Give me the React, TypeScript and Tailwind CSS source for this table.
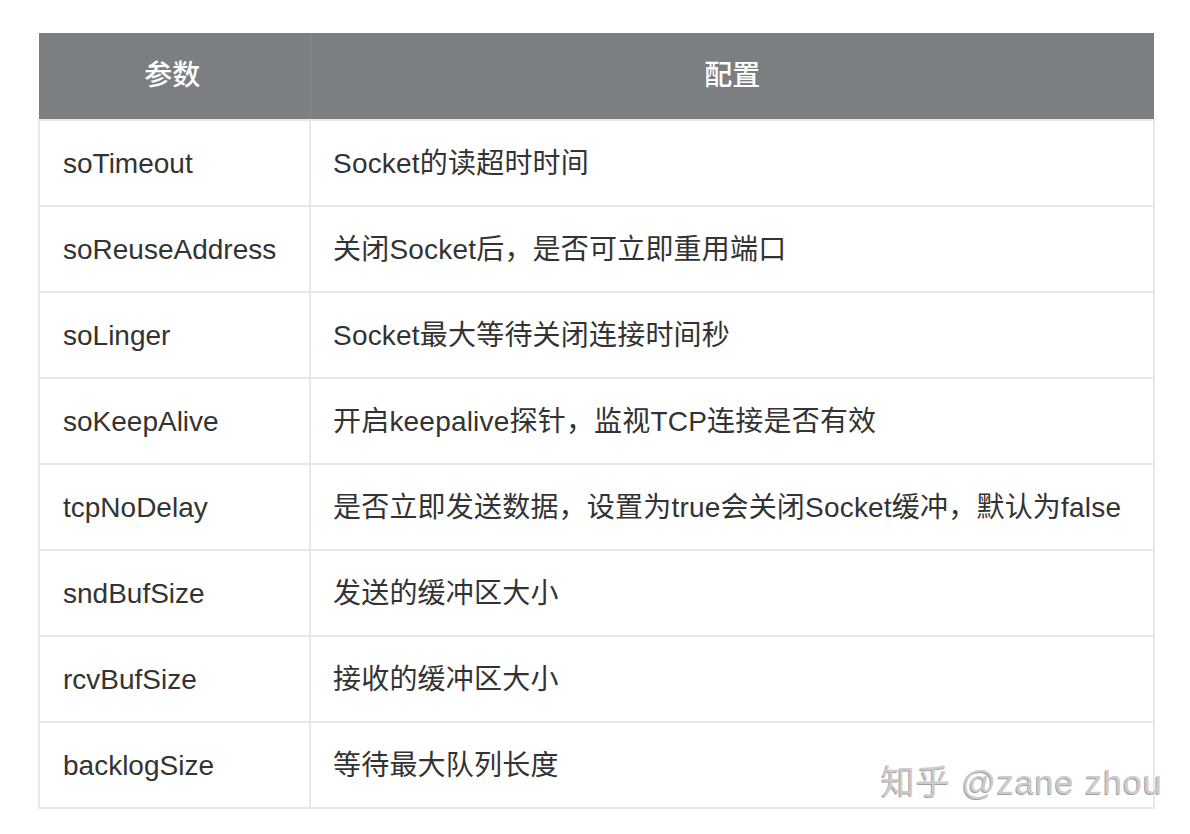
import React from "react";

const rows: [string, string][] = [
  ["soTimeout", "Socket的读超时时间"],
  ["soReuseAddress", "关闭Socket后，是否可立即重用端口"],
  ["soLinger", "Socket最大等待关闭连接时间秒"],
  ["soKeepAlive", "开启keepalive探针，监视TCP连接是否有效"],
  ["tcpNoDelay", "是否立即发送数据，设置为true会关闭Socket缓冲，默认为false"],
  ["sndBufSize", "发送的缓冲区大小"],
  ["rcvBufSize", "接收的缓冲区大小"],
  ["backlogSize", "等待最大队列长度"],
];

export default function App() {
  return (
    <div
      className="relative w-[1190px] h-[834px] bg-white pt-[33px] pl-[38px]"
      style={{ fontFamily: '"Liberation Sans", "Noto Sans CJK SC", sans-serif' }}
    >
      <table className="border-collapse w-[1117px] table-fixed">
        <colgroup>
          <col className="w-[271px]" />
          <col />
        </colgroup>
        <thead>
          <tr className="h-[87px] bg-[#7b7f82] text-white text-[28px] font-medium">
            <th className="border-r border-r-[#8a8d90] text-center font-medium pr-[4px]">参数</th>
            <th className="text-center font-medium">配置</th>
          </tr>
        </thead>
        <tbody>
          {rows.map(([k, v]) => (
            <tr key={k} className="h-[86px] text-[28px] text-[#333333]">
              <td className="border-2 border-[#e8e8e8] pl-[23px] pt-[2px]">{k}</td>
              <td className="border-2 border-[#e8e8e8] pl-[22px] pt-[2px] whitespace-nowrap tracking-[0.2px]">{v}</td>
            </tr>
          ))}
        </tbody>
      </table>
      <div
        className="absolute left-[881px] top-[765px] text-[34px] text-[#cccccc] whitespace-nowrap leading-none tracking-[1px]"
        style={{ textShadow: "-1px 1px 0 #a0a0a0" }}
      >
        知乎 @zane zhou
      </div>
    </div>
  );
}
